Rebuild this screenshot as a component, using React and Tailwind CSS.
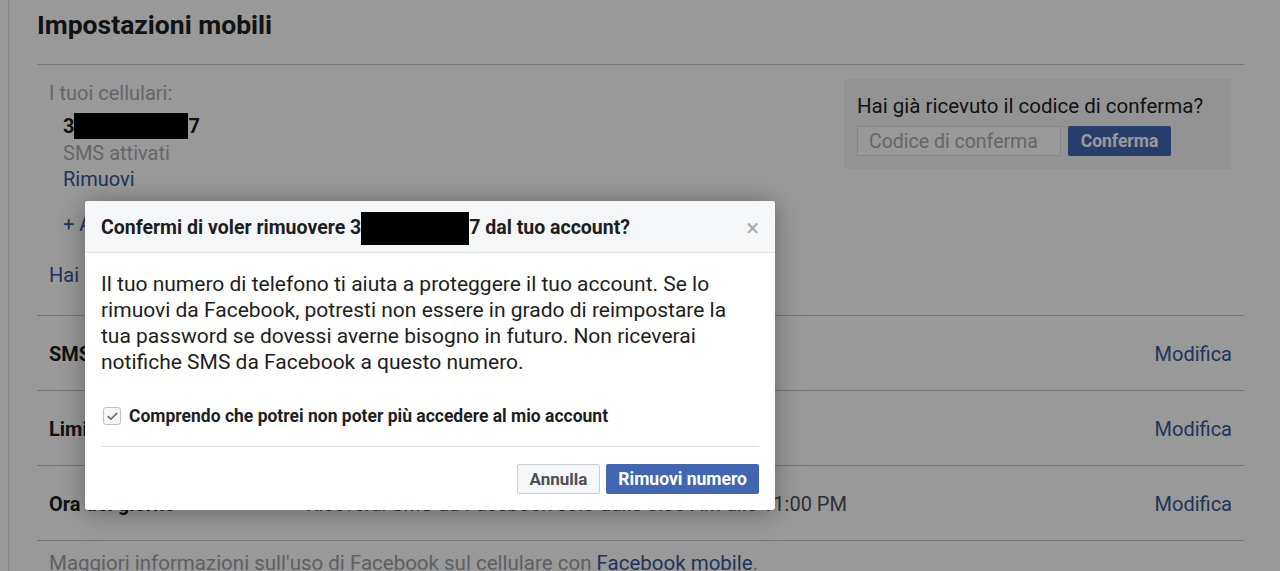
import { Check } from "lucide-react";

function Row({ label, value }) {
  return (
    <div className="flex items-center h-[75px] border-b border-[#c4c4c4] px-3 pt-[2px]">
      <div className="w-[257px] font-bold text-[#1c1e21]">{label}</div>
      <div className="flex-1 text-[#4b4f56]">{value}</div>
      <a className="text-[#365899]">Modifica</a>
    </div>
  );
}

export default function App() {
  return (
    <div className="relative h-[571px] overflow-hidden bg-white font-['Roboto',sans-serif] text-[20px]">
      {/* PAGE */}
      <div className="ml-2 h-full border-l border-[#dddfe2] pl-7 pr-9">
        <h1 className="h-[65px] pt-[5px] text-[26.5px] font-bold text-[#1c1e21] border-b border-[#c8c8c8]">
          Impostazioni mobili
        </h1>

        <div className="flex justify-between pt-[14px] h-[251px] border-b border-[#c4c4c4]">
          <div className="pl-3">
            <p className="text-[#a8abb0] leading-[28px]">I tuoi cellulari:</p>
            <div className="pl-[14px]">
              <p className="mt-[5px] font-bold text-[#1c1e21] leading-[28px] flex items-center">
                3
                <span className="inline-block w-[114px] h-[26px] bg-black"></span>
                7
              </p>
              <p className="text-[#a8abb0] leading-[26px]">SMS attivati</p>
              <a className="block text-[#365899] leading-[27px]">Rimuovi</a>
              <a className="block text-[#365899] mt-[18px] leading-[27px]">+ Aggiungi un altro cellulare</a>
            </div>
            <a className="block text-[#365899] mt-[24px] leading-[27px]">Hai perso il telefono?</a>
          </div>

          <div className="mr-[13px] w-[387px] h-[90px] bg-[#f5f6f7] px-[13px] pt-[15px] self-start">
            <p className="text-[20.5px] text-[#1c1e21] leading-[24px]">Hai già ricevuto il codice di conferma?</p>
            <div className="flex gap-[7px] mt-[8px]">
              <input
                className="w-[204px] h-[30px] border border-[#dddfe2] bg-white px-[11px] text-[19.5px] placeholder:text-[#a8abb0] outline-none"
                placeholder="Codice di conferma"
              />
              <button className="w-[103px] h-[30px] rounded-[2px] bg-[#4267b2] text-white text-[17.5px] font-bold">
                Conferma
              </button>
            </div>
          </div>
        </div>

        <Row label="SMS attivati" value="Attivati per le notifiche" />
        <Row label="Limiti giornalieri" value="Nessun limite" />
        <Row label="Ora del giorno" value="Riceverai SMS da Facebook solo dalle 8:00 AM alle 11:00 PM" />

        <p className="pl-3 pt-[7px] text-[20.5px] text-[#9da0a5]">
          Maggiori informazioni sull'uso di Facebook sul cellulare con{" "}
          <a className="text-[#365899]">Facebook mobile</a>.
        </p>
      </div>

      {/* OVERLAY */}
      <div className="absolute inset-0 bg-black/40"></div>

      {/* DIALOG */}
      <div className="absolute left-[85px] top-[201px] w-[690px] bg-white rounded-[3px] shadow-[0_2px_26px_rgba(0,0,0,0.35)] text-[#1c1e21]">
        <div className="h-[52px] flex items-center justify-between bg-[#f5f6f7] border-b border-[#e5e5e5] rounded-t-[3px] pl-4 pr-4">
          <p className="text-[19.5px] font-bold flex items-center pt-[3px]">
            Confermi di voler rimuovere 3
            <span className="inline-block w-[108px] h-[33px] bg-black"></span>
            7 dal tuo account?
          </p>
          <span className="text-[#a6a8ad] text-[24px] leading-none pt-[2px]">×</span>
        </div>

        <div className="px-4 pt-[18px]">
          <p className="text-[21px] leading-[26px]">
            Il tuo numero di telefono ti aiuta a proteggere il tuo account. Se lo
            <br />
            rimuovi da Facebook, potresti non essere in grado di reimpostare la
            <br />
            tua password se dovessi averne bisogno in futuro. Non riceverai
            <br />
            notifiche SMS da Facebook a questo numero.
          </p>

          <label className="flex items-center gap-2 mt-[28px] pb-[17px] border-b border-[#dddfe2]">
            <span className="ml-[2px] w-[18px] h-[18px] flex items-center justify-center border border-[#bec3c9] rounded-[3px] bg-[#f5f6f7]">
              <Check size={13} strokeWidth={3} className="text-[#606770]" />
            </span>
            <span className="text-[17.5px] font-bold">Comprendo che potrei non poter più accedere al mio account</span>
          </label>

          <div className="flex justify-end gap-[6px] pt-[17px] pb-[16px]">
            <button className="h-[30px] px-3 border border-[#ccd0d5] bg-[#f5f6f7] rounded-[2px] text-[17px] font-bold text-[#4b4f56]">
              Annulla
            </button>
            <button className="h-[30px] px-3 bg-[#4267b2] rounded-[2px] text-[17.5px] font-bold text-white">
              Rimuovi numero
            </button>
          </div>
        </div>
      </div>
    </div>
  );
}
